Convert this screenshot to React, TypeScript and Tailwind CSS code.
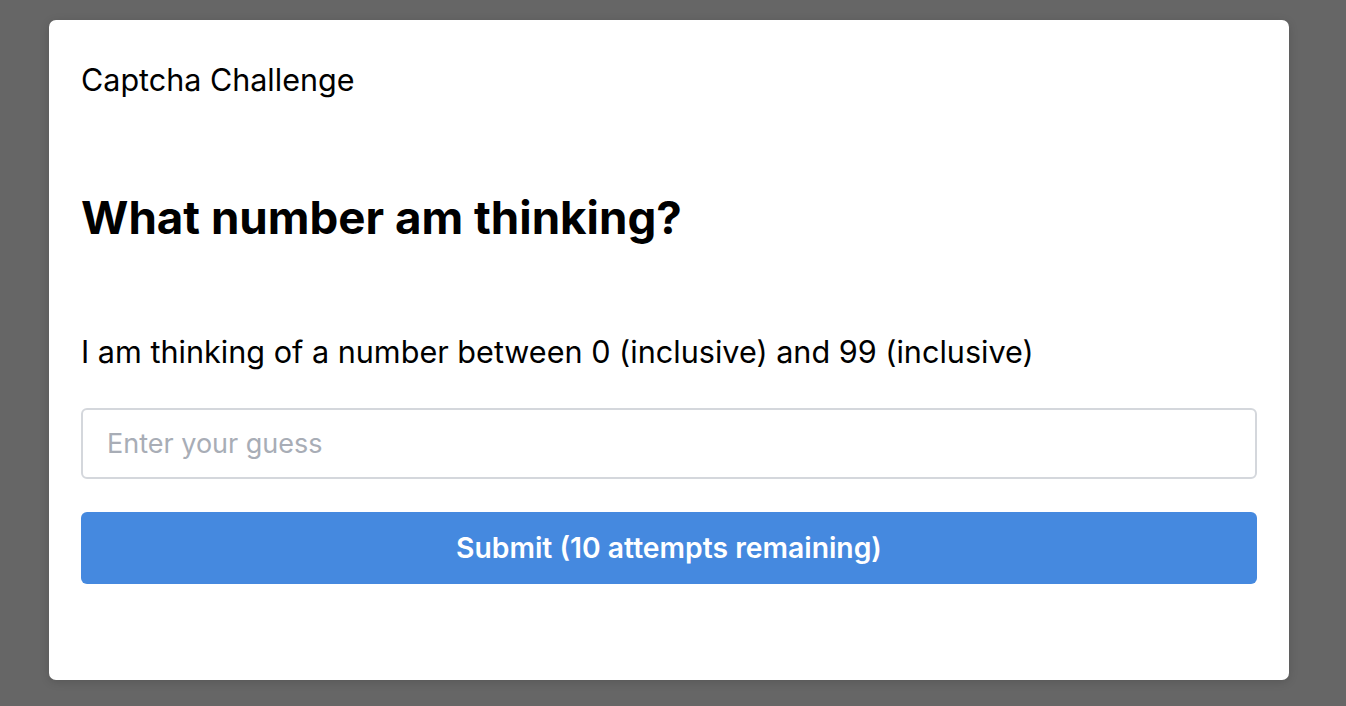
import React from 'react';

const App: React.FC = () => {
  return (
    <div className="min-h-[706px] w-full bg-[#666666] pt-[20px] font-['Inter','Noto_Sans',sans-serif]">
      <div className="ml-[49px] w-[1240px] h-[660px] rounded-[7px] bg-white px-8 pt-[41px] shadow-[0_2px_10px_rgba(0,0,0,0.15)]">
        <h1 className="text-[30.5px] leading-[38px] text-black">Captcha Challenge</h1>
        <h2 className="mt-[91px] text-[45.7px] leading-[56px] font-bold text-black">
          What number am thinking?
        </h2>
        <p className="mt-[88px] text-[30.6px] leading-[36px] text-black">
          I am thinking of a number between 0 (inclusive) and 99 (inclusive)
        </p>
        <input
          type="text"
          placeholder="Enter your guess"
          className="mt-[38px] block w-full h-[71px] rounded-[6px] border-2 border-[#d4d7dc] px-[24px] text-[27px] text-black placeholder:text-[#a8adb6] outline-none"
        />
        <button className="mt-[33px] block w-full h-[72px] rounded-[6px] bg-[#4589df] text-[28.3px] font-semibold text-white">
          Submit (10 attempts remaining)
        </button>
      </div>
    </div>
  );
};

export default App;
